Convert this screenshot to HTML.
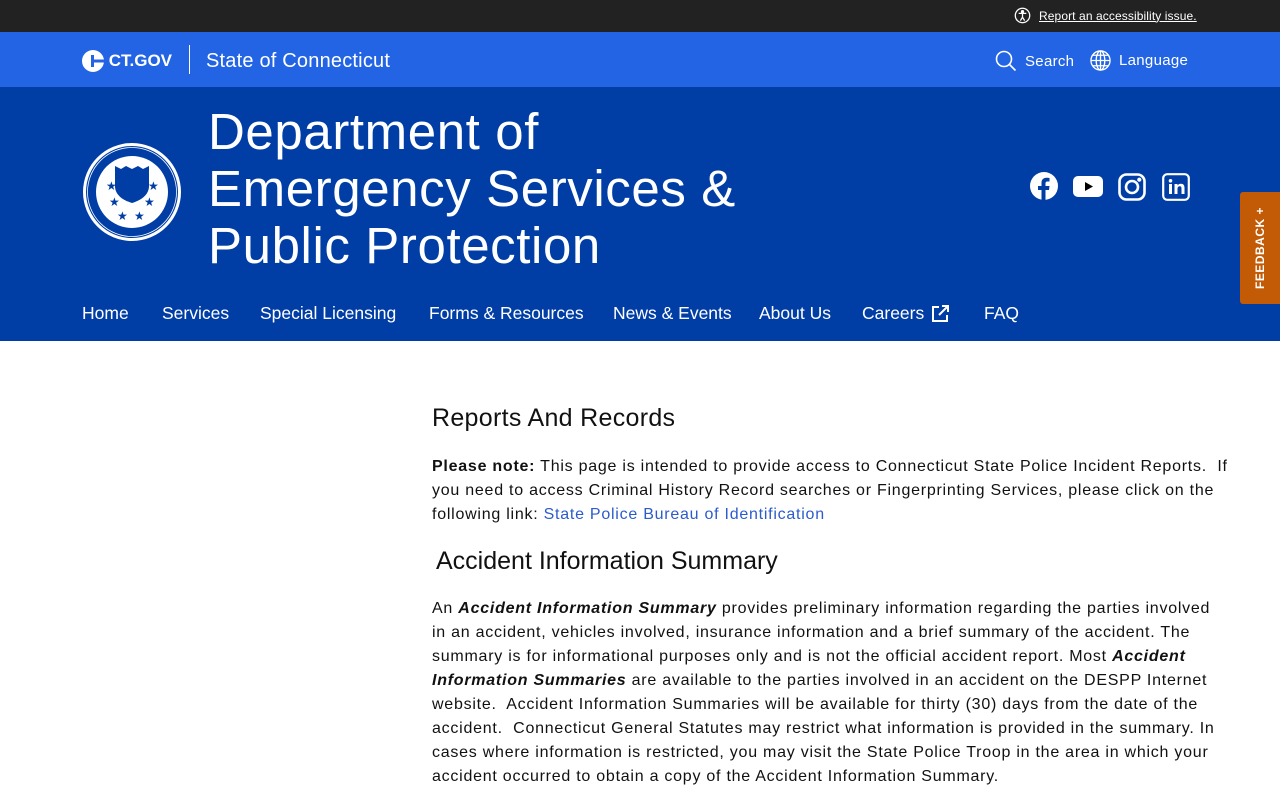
<!DOCTYPE html>
<html><head><meta charset="utf-8"><style>
*{margin:0;padding:0;box-sizing:border-box}
body{width:1280px;height:800px;overflow:hidden;background:#fff;font-family:"Liberation Sans",sans-serif;color:#111}
.top{height:32px;background:#222;position:relative}
.top .acc{position:absolute;left:1014px;top:7px;color:#fff;font-size:12px;display:flex;align-items:center;gap:8px;letter-spacing:.1px}
.top .acc span{text-decoration:underline}
.bar{height:55px;background:#2264e4;position:relative;color:#fff}
.logo{position:absolute;left:82px;top:18px;display:flex;align-items:center;font-weight:bold;font-size:17px}
.sep{position:absolute;left:189px;top:13px;width:1px;height:29px;background:#fff}
.state{position:absolute;left:206px;top:18px;font-size:20px;letter-spacing:.2px}
.sr{position:absolute;top:18px;font-size:15px;display:flex;align-items:center;gap:8px;letter-spacing:.3px}
.hdr{height:254px;background:#003da5;position:relative;color:#fff}
.seal{position:absolute;left:82px;top:55px}
.title{position:absolute;left:208px;top:16px;font-size:51px;line-height:57px;letter-spacing:.6px}
.soc{position:absolute;top:85px}
.nav{position:absolute;top:216px;left:82px;font-size:17.5px;display:flex}
.nav span{position:absolute;display:flex;align-items:center;gap:6px;white-space:nowrap}
.fb{position:absolute;right:0;top:192px;width:40px;height:112px;background:#c35a05;border-radius:3px 0 0 3px;color:#fff;font-size:12px;font-weight:bold;display:flex;align-items:center;justify-content:center}
.fb span{transform:rotate(-90deg);white-space:nowrap;letter-spacing:.5px}
.main{position:absolute;left:432px;top:404px;width:820px}
h1{font-weight:normal;font-size:25px;letter-spacing:.3px}
p{font-size:16px;line-height:24px;letter-spacing:.75px;white-space:nowrap}
a{color:#2c5bcc;text-decoration:none}
h2{font-weight:normal;font-size:25px;margin:20px 0 0 4px}
</style></head><body>
<div class="top"><div class="acc"><svg width="17" height="17" viewBox="0 0 20 20" fill="none" stroke="#fff" stroke-width="1.5"><circle cx="10" cy="10" r="8.5"/><circle cx="10" cy="5.5" r="1.2" fill="#fff"/><path d="M5.5 7.5h9M10 8v4l-2.5 4M10 12l2.5 4"/></svg><span>Report an accessibility issue.</span></div></div>
<div class="bar">
<div class="logo"><svg width="22" height="22" viewBox="0 0 22 22"><circle cx="11" cy="11" r="11" fill="#fff"/><rect x="9" y="5" width="3" height="12" fill="#2264e4"/><rect x="12" y="9.5" width="10" height="3" fill="#2264e4"/></svg>&nbsp;CT.GOV</div>
<div class="sep"></div><div class="state">State of Connecticut</div>
<div class="sr" style="left:995px"><svg width="22" height="22" viewBox="0 0 22 22" fill="none" stroke="#fff" stroke-width="1.6"><circle cx="9" cy="9" r="7.5"/><path d="M14.5 14.5l6 6"/></svg>Search</div>
<div class="sr" style="left:1090px"><svg width="21" height="21" viewBox="0 0 22 22" fill="none" stroke="#fff" stroke-width="1.4"><circle cx="11" cy="11" r="10"/><ellipse cx="11" cy="11" rx="4.5" ry="10"/><path d="M1 11h20M3 5.5h16M3 16.5h16M11 1v20"/></svg>Language</div>
</div>
<div class="hdr">
<svg class="seal" width="100" height="100" viewBox="0 0 100 100"><circle cx="50" cy="50" r="49" fill="#fff"/><circle cx="50" cy="50" r="46" fill="#003da5"/><circle cx="50" cy="50" r="44.5" fill="none" stroke="#fff" stroke-width=".8"/><circle cx="50" cy="50" r="36" fill="#fff"/><path d="M33 24l6 3 5-3 6 3 6-3 5 3 6-3v20c0 10-10 15-17 17-7-2-17-7-17-17z" fill="#003da5"/><g fill="#003da5"><text x="24" y="48" font-size="12">★</text><text x="66" y="48" font-size="12">★</text><text x="27" y="64" font-size="12">★</text><text x="62" y="64" font-size="12">★</text><text x="35" y="78" font-size="12">★</text><text x="52" y="78" font-size="12">★</text></g></svg>
<div class="title">Department of<br>Emergency Services &amp;<br>Public Protection</div>
<svg class="soc" style="left:1030px" width="28" height="28" viewBox="0 0 28 28"><circle cx="14" cy="14" r="14" fill="#fff"/><path d="M15.5 28v-10h3.5l.5-4h-4v-2.5c0-1.2.4-2 2-2h2V6c-.5 0-1.6-.2-3-.2-3 0-5 1.8-5 5.1V14H8v4h3.5v10z" fill="#003da5"/></svg>
<svg class="soc" style="left:1073px;top:89px" width="30" height="21" viewBox="0 0 30 21"><rect width="30" height="21" rx="5" fill="#fff"/><path d="M12 6l8 4.5-8 4.5z" fill="#000"/></svg>
<svg class="soc" style="left:1118px;top:86px" width="28" height="28" viewBox="0 0 28 28" fill="none" stroke="#fff" stroke-width="2.6"><rect x="1.5" y="1.5" width="25" height="25" rx="7"/><circle cx="14" cy="14" r="6"/><circle cx="21.3" cy="6.7" r=".8" fill="#fff"/></svg>
<svg class="soc" style="left:1162px;top:86px" width="28" height="28" viewBox="0 0 28 28"><rect x="1.2" y="1.2" width="25.6" height="25.6" rx="4" fill="none" stroke="#fff" stroke-width="2.2"/><rect x="7" y="11" width="3" height="10" fill="#fff"/><circle cx="8.5" cy="7.8" r="1.8" fill="#fff"/><path d="M12.5 11h3v1.5c.6-1 1.8-1.8 3.4-1.8 2.6 0 3.6 1.6 3.6 4.4V21h-3v-5.4c0-1.4-.4-2.3-1.7-2.3s-2.3.9-2.3 2.5V21h-3z" fill="#fff"/></svg>
<div class="nav"><span style="left:0">Home</span><span style="left:80px">Services</span><span style="left:178px">Special Licensing</span><span style="left:347px">Forms &amp; Resources</span><span style="left:531px">News &amp; Events</span><span style="left:677px">About Us</span><span style="left:780px">Careers <svg width="20" height="20" viewBox="0 0 20 20" fill="none" stroke="#fff" stroke-width="2"><path d="M9 3H3v14h14v-6M12 2h6v6M18 2l-9 9"/></svg></span><span style="left:902px">FAQ</span></div>
</div>
<div class="fb"><span>FEEDBACK +</span></div>
<div class="main">
<h1>Reports And Records</h1>
<p style="margin-top:22px"><b>Please note:</b> This page is intended to provide access to Connecticut State Police Incident Reports.&nbsp; If<br>you need to access Criminal History Record searches or Fingerprinting Services, please click on the<br>following link: <a>State Police Bureau of Identification</a></p>
<h2>Accident Information Summary</h2>
<p style="margin-top:21px">An <b><i>Accident Information Summary</i></b> provides preliminary information regarding the parties involved<br>in an accident, vehicles involved, insurance information and a brief summary of the accident. The<br>summary is for informational purposes only and is not the official accident report. Most <b><i>Accident</i></b><br><b><i>Information Summaries</i></b> are available to the parties involved in an accident on the DESPP Internet<br>website.&nbsp; Accident Information Summaries will be available for thirty (30) days from the date of the<br>accident.&nbsp; Connecticut General Statutes may restrict what information is provided in the summary. In<br>cases where information is restricted, you may visit the State Police Troop in the area in which your<br>accident occurred to obtain a copy of the Accident Information Summary.</p>
</div>
</body></html>
